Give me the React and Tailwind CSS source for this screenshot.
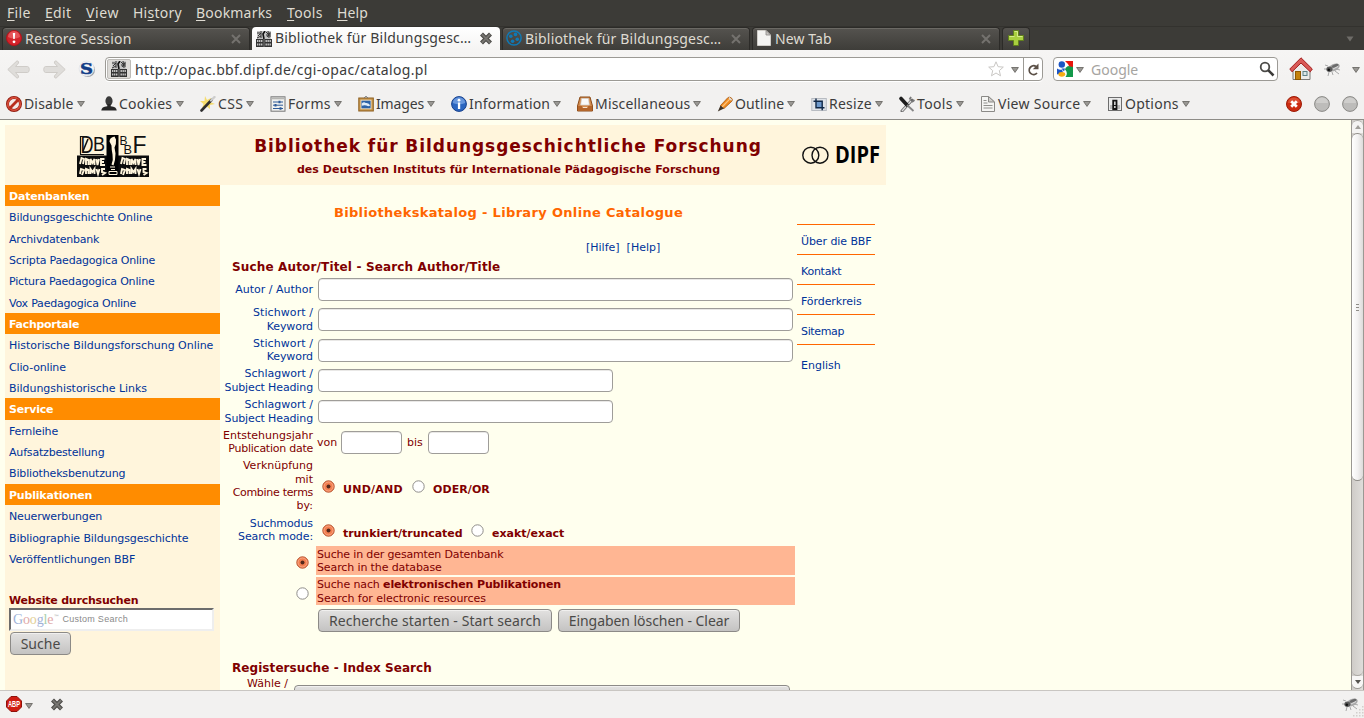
import React from "react";

/* ---------- small shared glyphs ---------- */

const Caret = ({ className = "" }) => (
  <svg width="8" height="6" viewBox="0 0 8 6" className={"shrink-0 " + className}>
    <path d="M0.6 0.5H7.4L4 5.4Z" fill="#9a9894" stroke="#6d6b67" strokeWidth="0.9" />
  </svg>
);

const Favicon = () => (
  <svg width="16" height="16" viewBox="0 0 16 16" className="shrink-0">
    <rect x="1" y="0" width="14" height="8" fill="#c4c4c4" />
    <path d="M1 2h3M2 5l3-3M5 0v7M1 7l4-2M10 1l2 2M11 6l3-4M14 1v5M10 4h4M12 0l1 7" stroke="#333" strokeWidth="1" fill="none" />
    <path d="M9 0 7 3 8 8" stroke="#111" strokeWidth="1.6" fill="none" />
    <rect x="0" y="8" width="16" height="8" fill="#333" />
    <path d="M1 10h5.500M1 13.500h5.500M9.500 10h5.500M9.500 13.500h5.500" stroke="#c2c2c2" strokeWidth="1.8" strokeDasharray="1.4 .6" />
    <path d="M8 8v8" stroke="#777" />
  </svg>
);

const Fly = () => (
  <svg width="18" height="15" viewBox="0 0 18 15" className="shrink-0">
    <path d="M4 4 1 3M3 7H0M5 10 4 14M8 10l1 3M11 9l4 3M12 7l4 1" stroke="#a9a9a9" strokeWidth="1" fill="none" />
    <ellipse cx="10" cy="5.500" rx="6" ry="3.500" fill="#a9a9a9" transform="rotate(-24 10 5.500)" />
    <ellipse cx="11" cy="3.800" rx="3.600" ry="1.500" fill="#6b6b6b" transform="rotate(-20 11 3.800)" />
    <ellipse cx="5.400" cy="7.300" rx="3" ry="2.700" fill="#5a5a5a" />
    <circle cx="4.800" cy="7.700" r="1.300" fill="#111" />
    <path d="M9 7 14 4.500" stroke="#dedede" />
  </svg>
);

const TabClose = () => (
  <svg width="12" height="12" viewBox="0 0 12 12" className="shrink-0">
    <path d="M2 2 10 10M10 2 2 10" stroke="#74726e" strokeWidth="2" />
  </svg>
);

const HeavyClose = () => (
  <svg width="14" height="13" viewBox="0 0 14 13" className="shrink-0">
    <path d="M2.5 2 11.5 11M11.5 2 2.5 11" stroke="#4a4946" strokeWidth="4.2" />
    <path d="M2.8 2.3 11.2 10.7M11.2 2.3 2.8 10.7" stroke="#777571" strokeWidth="2" />
  </svg>
);

/* ---------- browser chrome ---------- */

const menus = [
  ["", "F", "ile", "w-[38px] tracking-[0.300px]"],
  ["", "E", "dit", "w-[41px] tracking-[0.300px]"],
  ["", "V", "iew", "w-[47px] tracking-[0.600px]"],
  ["Hi", "s", "tory", "w-[63px] tracking-[0.250px]"],
  ["", "B", "ookmarks", "w-[91px] tracking-[0.200px]"],
  ["", "T", "ools", "w-[50px] tracking-[0.350px]"],
  ["", "H", "elp", "w-[50px] tracking-[0.100px]"],
];

function MenuBar() {
  return (
    <div className="flex h-[26px] items-center bg-[#3c3b37] pb-[2px] pl-[7px] text-[14px] text-[#dfdbd2]">
      {menus.map(([a, k, b, w]) => (
        <span key={k + b} className={"shrink-0 whitespace-nowrap " + w}>
          {a}
          <span className="underline underline-offset-2">{k}</span>
          {b}
        </span>
      ))}
    </div>
  );
}

function Tab({ icon, title, active, width, className = "" }) {
  return (
    <div
      className={
        "flex h-[23px] shrink-0 items-center rounded-t-[4px] pr-[7px] " +
        width +
        " " +
        (active
          ? "bg-gradient-to-b from-white to-[#f5f4f3] pl-[4px] text-[#3c3c3c]"
          : "border border-b-0 border-[#2c2b28] bg-gradient-to-b from-[#55534f] to-[#3e3d39] pl-[3px] text-[#dfdbd2] shadow-[inset_0_1px_0_#6b6964]") +
        " " +
        className
      }
    >
      {icon}
      <span className="mb-[2px] ml-[3px] grow whitespace-nowrap">{title}</span>
      <div className="mb-[1px]">{active ? <HeavyClose /> : <TabClose />}</div>
    </div>
  );
}

function TabBar() {
  return (
    <div className="flex h-[24px] items-end gap-[2px] border-t border-[#33322e] bg-[#3c3b37] pl-[2px] text-[14px]">
      <Tab
        width="w-[248px]"
        title="Restore Session"
        className="tracking-[0.200px]"
        icon={
          <svg width="16" height="16" viewBox="0 0 16 16" className="-mt-[2px] shrink-0">
            <circle cx="8" cy="8" r="7.5" fill="#d2232a" stroke="#b3141b" />
            <path d="M2 7a6 6 0 0 1 12 0q-6 3-12 0" fill="#ee6a6c" opacity=".7" />
            <path d="M6.8 3h2.4l-.5 6H7.3z" fill="#fff" />
            <circle cx="8" cy="11.8" r="1.4" fill="#fff" />
          </svg>
        }
      />
      <Tab width="w-[248px]" active className="tracking-[0.180px]" title="Bibliothek für Bildungsgesc…" icon={<Favicon />} />
      <Tab
        width="w-[248px]"
        title="Bibliothek für Bildungsgesc…"
        className="tracking-[0.180px]"
        icon={
          <svg width="16" height="16" viewBox="0 0 16 16" className="-mt-[2px] shrink-0">
            <circle cx="8" cy="8" r="7.1" fill="none" stroke="#0f79b5" strokeWidth="1.5" />
            <g fill="#0f79b5">
              <circle cx="9.5" cy="4.4" r="1.8" />
              <circle cx="4.8" cy="6.3" r="1.8" />
              <circle cx="6.6" cy="11.2" r="1.8" />
              <circle cx="11.3" cy="9.3" r="1.8" />
            </g>
          </svg>
        }
      />
      <Tab
        width="w-[248px]"
        title="New Tab"
        className="tracking-[0.100px]"
        icon={
          <svg width="14" height="16" viewBox="0 0 14 16" className="-mt-[2px] ml-[1px] mr-[1px] shrink-0">
            <path d="M.5.5H9L13.5 5v10.5H.5z" fill="#f4f4f2" stroke="#d0cec9" />
            <path d="M9 .5V5h4.5z" fill="#c9c7c3" stroke="#8b8985" strokeWidth=".8" />
          </svg>
        }
      />
      <div className="flex h-[23px] w-[28px] shrink-0 items-center justify-center rounded-t-[4px] border border-b-0 border-[#2c2b28] bg-gradient-to-b from-[#55534f] to-[#3e3d39] pb-[2px]">
        <svg width="16" height="16" viewBox="0 0 16 16">
          <path d="M5.5 .5h5v5h5v5h-5v5h-5v-5h-5v-5h5z" fill="#a9cf3f" stroke="#61801c" />
          <path d="M6.5 1.5h3v5h5M1.5 6.5h5" fill="none" stroke="#d6ec8b" />
        </svg>
      </div>
      <div className="flex h-[23px] grow items-center justify-end pr-[10px]">
        <svg width="8" height="6" viewBox="0 0 8 6">
          <path d="M.5.5h7L4 5.5z" fill="#6e6c68" />
        </svg>
      </div>
    </div>
  );
}

const NavArrow = ({ flip }) => (
  <svg width="23" height="19" viewBox="0 0 23 19" className={"shrink-0 " + (flip ? "-scale-x-100" : "")}>
    <path
      d="M10 .8Q12 1 11.600 3L8.500 6.500H20.500Q22.300 6.700 22.300 9.500T20.500 12.500H8.500L11.600 16Q12 18 10 18.200L.8 9.500z"
      fill="#dfddda"
      stroke="#cfccc8"
    />
  </svg>
);

function NavBar() {
  return (
    <div className="flex h-[38px] items-center bg-gradient-to-b from-[#f6f5f4] to-[#f2f1f0] pl-[7px] pr-[4px] text-[14px]">
      <NavArrow />
      <div className="w-[13px] shrink-0" />
      <NavArrow flip />
      <svg width="18" height="18" viewBox="0 0 18 18" className="ml-[12px] shrink-0">
        <circle cx="9.800" cy="9.800" r="7.200" fill="#9ea3ab" />
        <circle cx="8.600" cy="8.600" r="7.500" fill="#f4f5f7" stroke="#dcdfe4" strokeWidth=".6" />
        <text x="2" y="14.200" fontFamily="DejaVu Serif" fontWeight="700" fontSize="15.500" textLength="13" lengthAdjust="spacingAndGlyphs" fill="#123c86" stroke="#123c86" strokeWidth=".5">S</text>
      </svg>
      <div className="ml-[9px] flex h-[24px] w-[938px] shrink-0 items-center rounded-[4px] border border-[#9c9a95] bg-white shadow-[0_1px_0_#fff]">
        <div className="ml-[1px] flex h-[20px] w-[24px] shrink-0 items-center justify-center rounded-[2px] border border-[#bdbbb7] bg-[#dddbd8]">
          <Favicon />
        </div>
        <span className="ml-[4px] grow whitespace-nowrap tracking-[0.350px] text-[#3c3c3c]">http://opac.bbf.dipf.de/cgi-opac/catalog.pl</span>
        <svg width="16" height="16" viewBox="0 0 16 16" className="mr-[7px] shrink-0">
          <path d="M8 .8 10.100 5.700 15.300 6.100 11.300 9.600 12.500 14.800 8 12 3.500 14.800 4.700 9.600.700 6.100 5.900 5.700z" fill="#fff" stroke="#c9c7c4" />
        </svg>
        <Caret className="mr-[4px] mt-[2px]" />
        <div className="flex h-full w-[19px] items-center justify-center border-l border-[#9c9a95]">
          <svg width="12" height="13" viewBox="0 0 12 13">
            <path d="M9 3.400A4.400 4.400 0 1 0 10 10" fill="none" stroke="#5b5047" strokeWidth="1.800" />
            <path d="M11.500 .5V6.200H5.800z" fill="#5b5047" />
          </svg>
        </div>
      </div>
      <div className="ml-[10px] flex h-[24px] w-[225px] shrink-0 items-center rounded-[4px] border border-[#9c9a95] bg-white pl-[3px] pr-[2px]">
        <svg width="16" height="16" viewBox="0 0 16 16" className="shrink-0">
          <rect width="16" height="16" fill="#fff" />
          <path d="M8 0h8v7h-3Q11 2 8 0z" fill="#e8150c" />
          <path d="M16 6v10H8.500Q11.500 12 8 8.500q0-2 3-3.500z" fill="#12994a" />
          <path d="M0 7.500q3 2 5 1l1 3-6 2z" fill="#1b55c5" />
          <circle cx="4.800" cy="3.500" r="3.200" fill="#1b55c5" />
          <path d="M4.500 7.500h3.500l-1 3z" fill="#1b55c5" />
          <ellipse cx="4.800" cy="13.300" rx="3.400" ry="2.400" fill="#f6ad14" />
        </svg>
        <Caret className="ml-[3px] mt-[2px]" />
        <span className="ml-[7px] grow text-[#a6a4a1]">Google</span>
        <svg width="16" height="16" viewBox="0 0 16 16" className="shrink-0">
          <circle cx="6" cy="6" r="4.300" fill="none" stroke="#4b4a47" strokeWidth="1.800" />
          <path d="M9.200 9.200 14.500 14.500" stroke="#3b3a38" strokeWidth="2.600" />
        </svg>
      </div>
      <svg width="24" height="24" viewBox="0 0 24 24" className="ml-[11px] shrink-0">
        <path d="M4 12v10.500h17V12L12.500 5z" fill="#ececea" stroke="#7b7a78" />
        <path d="M12 .8 23.300 12l-2 2.800L12 6 3 14.800.8 12z" fill="#d95a57" stroke="#a4201f" />
        <rect x="6.500" y="14.500" width="5" height="8" fill="#c4820e" stroke="#8f5902" />
        <rect x="14" y="14.500" width="4" height="4" fill="#dbe7e9" stroke="#5f8287" />
      </svg>
      <div className="w-[11px] shrink-0" />
      <Fly />
      <Caret className="ml-auto mt-[2px]" />
    </div>
  );
}

const I = ({ children }) => (
  <svg width="16" height="16" viewBox="0 0 16 16" className="shrink-0">
    {children}
  </svg>
);

const icons = {
  disable: (
    <I>
      <circle cx="8" cy="8" r="6.500" fill="#f4e9e7" stroke="#8f1a0d" strokeWidth="3" />
      <circle cx="8" cy="8" r="6.300" fill="none" stroke="#d64c3a" strokeWidth="1.800" />
      <path d="M3.600 12.400 12.400 3.600" stroke="#b92e1d" strokeWidth="2.800" />
    </I>
  ),
  cookies: (
    <I>
      <ellipse cx="8" cy="5" rx="3.600" ry="4.700" fill="#3a3a3a" />
      <path d="M6.300 8h3.400v2.200q6 .6 6 4.300H.3q0-3.700 6-4.300z" fill="#262626" />
    </I>
  ),
  css: (
    <I>
      <path d="M5 0 7 4 11 2 10 6 15 8 10 9 10 13 6 10 2 12 3.500 8 0 5 4.500 5z" fill="#f5dc6e" />
      <path d="M1.500 14.500 11.500 4" stroke="#2e2e2e" strokeWidth="2.600" strokeLinecap="round" />
      <path d="M11 4.500 14.500 1" stroke="#cdcdcd" strokeWidth="2.400" strokeLinecap="round" />
    </I>
  ),
  forms: (
    <I>
      <rect x="1" y=".8" width="14" height="14.400" fill="#f1f1ef" stroke="#777" />
      <rect x="1.500" y="1.300" width="13" height="2" fill="#b5b5b2" />
      <path d="M3 6h10M3 9.200h10M3 12.500h10" stroke="#2f5b98" />
      <path d="M9.500 4.700v2.600M5.500 7.900v2.600M10.500 11.200v2.600" stroke="#2f5b98" strokeWidth="2" />
    </I>
  ),
  images: (
    <I>
      <rect x=".8" y="2" width="14.500" height="13" fill="#c7964c" stroke="#8d5f1e" />
      <path d="M6 2 8 .3 10 2" fill="none" stroke="#777" />
      <rect x="3" y="4.200" width="10" height="8.600" fill="#2b62a8" stroke="#f1e6d3" strokeWidth=".8" />
      <path d="M3.800 7.500q2-2 4-.5 3-.5 4.500 2.500l-2 .8q-3.500-2-6.500-.5z" fill="#dcebfa" />
    </I>
  ),
  info: (
    <I>
      <circle cx="8" cy="8" r="7.400" fill="#2c66c0" stroke="#17408c" />
      <path d="M1.800 7a6.200 5.700 0 0 1 12.400 0q-6 2.500-12.400 0z" fill="#80abe8" opacity=".7" />
      <circle cx="8" cy="4.200" r="1.400" fill="#fff" />
      <rect x="6.900" y="6.500" width="2.300" height="6.500" fill="#fff" />
    </I>
  ),
  misc: (
    <I>
      <path d="M3 1h10l2.500 9v5H.5v-5z" fill="#d38b4e" stroke="#8a4a17" />
      <path d="M4.500 2.500h7l.8 6.500H3.700z" fill="#fafafa" stroke="#d0cfcc" strokeWidth=".7" />
      <path d="M.8 10h4l1 2h4.500l1-2h4v4.800H.8z" fill="#b5652a" />
      <path d="M5.800 11.500h4.400" stroke="#f6e1cc" />
    </I>
  ),
  outline: (
    <I>
      <path d="M3.500 9.500 11 1.500q2-1 3.500.6t.5 3L7 12.500z" fill="#f08a1d" stroke="#a4550c" strokeWidth=".8" />
      <path d="M5 11 13 2.800" stroke="#fcc57f" strokeWidth="1.200" />
      <path d="M3.500 9.500 7 12.500 .8 15.500z" fill="#3f3428" />
      <path d="M12 1.500 14.600 4.200" stroke="#ddd" strokeWidth="1.500" />
    </I>
  ),
  resize: (
    <I>
      <rect x=".8" y="2.500" width="14.500" height="12" fill="#dfe3e8" stroke="#b8bcc2" />
      <rect x="5" y="5.500" width="6" height="6" fill="#6e99cc" />
      <path d="M5 2.500v9.300h8.500M2.500 5.200h8.700v9" fill="none" stroke="#0f2747" strokeWidth="1.400" />
    </I>
  ),
  tools: (
    <I>
      <path d="M3 15 13 4" stroke="#6c6c6c" strokeWidth="3" strokeLinecap="round" />
      <path d="M3 15 12 5" stroke="#dedede" strokeWidth="1.300" />
      <path d="M10.500 3.500 12 .8M13 6l2.500-2" stroke="#777" strokeWidth="1.700" />
      <path d="M2 2.500 8 9" stroke="#1d1d1d" strokeWidth="3.600" strokeLinecap="round" />
      <path d="M8 9 14.500 15" stroke="#858585" strokeWidth="1.800" />
    </I>
  ),
  source: (
    <I>
      <path d="M1.500.5h7L14.500 6v9.500h-13z" fill="#f5f5f3" stroke="#8b8a87" />
      <path d="M8.500.5V6h6z" fill="#d2d0cd" stroke="#8b8a87" />
      <path d="M3.500 4.500h3M3.500 7h4M3.500 9.500h9M3.500 12h9" stroke="#90908d" />
    </I>
  ),
  options: (
    <I>
      <rect x="1.500" y="1.500" width="13" height="13" fill="#ebebeb" stroke="#6d6d6d" />
      <rect x="3" y="9" width="10" height="4" fill="#bcbcbc" />
      <path d="M6.200 13V4.600H9.500V13z" fill="#e4e4e4" stroke="#151515" strokeWidth="1.800" />
      <path d="M7 9.500h2" stroke="#151515" strokeWidth="1.200" />
    </I>
  ),
};

const devItems = [
  ["disable", "Disable", "w-[95px]", "w-[54px] tracking-[0.150px]"],
  ["cookies", "Cookies", "w-[99px]", "w-[58px] tracking-[0.250px]"],
  ["css", "CSS", "w-[70px]", "w-[29px] tracking-[0.300px]"],
  ["forms", "Forms", "w-[88px]", "w-[47px] tracking-[0.300px]"],
  ["images", "Images", "w-[93px]", "w-[52px] -tracking-[0.150px]"],
  ["info", "Information", "w-[126px]", "w-[85px] tracking-[0.180px]"],
  ["misc", "Miscellaneous", "w-[140px]", "w-[99px] tracking-[0.180px]"],
  ["outline", "Outline", "w-[94px]", "w-[53px] tracking-[0.120px]"],
  ["resize", "Resize", "w-[88px]", "w-[47px] tracking-[0.250px]"],
  ["tools", "Tools", "w-[81px]", "w-[40px] tracking-[0.350px]"],
  ["source", "View Source", "w-[127px]", "w-[86px] tracking-[0.300px]"],
  ["options", "Options", "w-[100px]", "w-[58px] tracking-[0.250px]"],
];

const GreyBall = () => (
  <svg width="16" height="16" viewBox="0 0 16 16" className="shrink-0">
    <circle cx="8" cy="8" r="7.400" fill="#bdbcba" stroke="#8b8a87" />
    <path d="M2 7a6 5.500 0 0 1 12 0z" fill="#cfcecc" />
  </svg>
);

function DevBar() {
  return (
    <div className="flex h-[32px] items-center border-b border-[#8e8c87] bg-[#f2f1f0] pl-[6px] pr-[6px] text-[14px] text-[#3c3c3c]">
      {devItems.map(([icon, label, w, tw]) => (
        <div key={label} className={"flex shrink-0 items-center " + w}>
          {icons[icon]}
          <span className={"ml-[2px] shrink-0 whitespace-nowrap " + tw}>{label}</span>
          <Caret className="-ml-px" />
        </div>
      ))}
      <div className="ml-auto flex gap-[12px]">
        <svg width="16" height="16" viewBox="0 0 16 16">
          <circle cx="8" cy="8" r="7.500" fill="#cc2c12" stroke="#9c1c08" />
          <path d="M2 7a6 5.500 0 0 1 12 0z" fill="#e25c42" opacity=".7" />
          <path d="M5.200 5.200 10.800 10.800M10.800 5.200 5.200 10.800" stroke="#fff" strokeWidth="2.800" />
        </svg>
        <GreyBall />
        <GreyBall />
      </div>
    </div>
  );
}

/* ---------- page content ---------- */

const BbfLogo = () => (
  <svg width="74" height="44" viewBox="0 0 74 44" overflow="visible">
    <path d="M4.500 2v18.500M4 20.500h24M4 2.500h6" fill="none" stroke="#111" strokeWidth="1.200" />
    <path d="M7 17 12 5" stroke="#111" strokeWidth="1.600" />
    <g fontFamily="Liberation Sans" fill="#111">
      <text x="4.500" y="18.500" fontSize="23" textLength="13" lengthAdjust="spacingAndGlyphs">D</text>
      <text x="17" y="17" fontSize="20.500" textLength="12" lengthAdjust="spacingAndGlyphs">B</text>
      <text x="43.500" y="11" fontSize="13" textLength="8" lengthAdjust="spacingAndGlyphs">B</text>
      <text x="47.500" y="19.500" fontSize="13" textLength="8.500" lengthAdjust="spacingAndGlyphs">B</text>
      <text x="56.500" y="19" fontSize="24" textLength="14" lengthAdjust="spacingAndGlyphs">F</text>
    </g>
    <rect x="1" y="21.500" width="72" height="21.500" fill="#0c0c0c" />
    <rect x="30.500" y="1" width="12" height="42" fill="#000" />
    <path d="M38.500 2.500q-5 1-5 5l2 4q0 4 1 9t-1 10l2 1q2-6 2-12l-1-6q2-4 1.500-8z" fill="#fff5dc" />
    <path d="M34 33h5M35 35.500h4M33 37.500h8v3h-8z" stroke="#fff5dc" fill="none" />
    <g fill="none" stroke="#fff5dc" strokeWidth="1.900">
      <path d="M4 30l1.500-6 2.500 1-1 5M10 31v-6l2.500 1v5M14.500 31v-6l2 4 2-4v6M20.500 25l1 6 1.500-6M28.500 25H25v6h4M25 28h3" />
      <path d="M4 40l1-5 3 1-2 5M10 40v-5l2.500 1v4M14.500 40v-5l2 3 2-3v5M20.500 35l1.500 5 1.500-5M29 35h-3v3l3 1-3 2" />
      <path d="M45 30l1.500-6 2.500 1-1 5M51 31v-6l2.500 1v5M55.500 31v-6l2 4 2-4v6M61.500 25l1 6 1.500-6M70 25h-3.500v6h4M66.500 28h3" />
      <path d="M45 40l1-5 3 1-2 5M51 40v-5l2.500 1v4M55.500 40v-5l2 3 2-3v5M61.500 35l1.500 5 1.500-5M70.500 35h-3v3l3 1-3 2" />
    </g>
  </svg>
);

function PageHeader() {
  return (
    <div className="flex h-[60px] w-[881px] bg-[#fff5dc]">
      <div className="flex w-[215px] shrink-0 justify-center pt-[9px]">
        <BbfLogo />
      </div>
      <div className="flex w-[576px] shrink-0 flex-col items-center whitespace-nowrap font-bold text-[#800000]">
        <div className="mt-[10px] text-[17px] leading-[22px] tracking-[0.940px]">Bibliothek für Bildungsgeschichtliche Forschung</div>
        <div className="mt-[6px] pl-px text-[11px] leading-[14px] tracking-[0.050px]">des Deutschen Instituts für Internationale Pädagogische Forschung</div>
      </div>
      <svg width="80" height="22" viewBox="0 0 80 22" className="ml-[6px] mt-[19px] shrink-0" overflow="visible">
        <circle cx="8.800" cy="11.200" r="8" fill="none" stroke="#111" strokeWidth="1.400" />
        <circle cx="18" cy="11.200" r="8" fill="none" stroke="#111" strokeWidth="1.400" />
        <text x="33" y="19" fontFamily="Open Sans" fontWeight="700" fontSize="23" textLength="45" lengthAdjust="spacingAndGlyphs" fill="#000">DIPF</text>
      </svg>
    </div>
  );
}

const sidebar = [
  {
    head: "Datenbanken",
    track: "-tracking-[0.200px]",
    links: [
      ["Bildungsgeschichte Online", "-tracking-[0.100px]"],
      ["Archivdatenbank", "-tracking-[0.200px]"],
      ["Scripta Paedagogica Online", "-tracking-[0.190px]"],
      ["Pictura Paedagogica Online", "-tracking-[0.190px]"],
      ["Vox Paedagogica Online", "-tracking-[0.220px]"],
    ],
  },
  {
    head: "Fachportale",
    track: "-tracking-[0.300px]",
    links: [
      ["Historische Bildungsforschung Online", "-tracking-[0.040px]"],
      ["Clio-online", "-tracking-[0.150px]"],
      ["Bildungshistorische Links", "-tracking-[0.040px]"],
    ],
  },
  {
    head: "Service",
    track: "-tracking-[0.200px]",
    links: [
      ["Fernleihe", "-tracking-[0.150px]"],
      ["Aufsatzbestellung", "-tracking-[0.180px]"],
      ["Bibliotheksbenutzung", "-tracking-[0.150px]"],
    ],
  },
  {
    head: "Publikationen",
    track: "-tracking-[0.200px]",
    links: [
      ["Neuerwerbungen", "-tracking-[0.150px]"],
      ["Bibliographie Bildungsgeschichte", "-tracking-[0.110px]"],
      ["Veröffentlichungen BBF", "-tracking-[0.130px]"],
    ],
  },
];

const buttonStyle =
  "shrink-0 rounded-[4px] border border-[#8c8a87] bg-gradient-to-b from-[#e2e1e0] to-[#c4c3c2] text-center font-['Noto_Sans',sans-serif] text-[14px] leading-[21px] text-[#4b4a48] whitespace-nowrap h-[23px] shadow-[inset_0_1px_0_#f1f0ef]";

function Sidebar() {
  return (
    <div className="w-[215px] shrink-0 bg-[#fff5dc] text-[#003399]">
      {sidebar.map(({ head, track, links }) => (
        <React.Fragment key={head}>
          <div className={"h-[21.350px] bg-[#ff8c00] pl-[4px] font-bold leading-[23px] text-white " + track}>{head}</div>
          {links.map(([l, t]) => (
            <div key={l} className={"h-[21.350px] whitespace-nowrap pl-[4px] leading-[23px] " + t}>
              {l}
            </div>
          ))}
        </React.Fragment>
      ))}
      <div className="mt-[25px] pl-[4px] font-bold leading-[14px] -tracking-[0.220px] text-[#800000]">Website durchsuchen</div>
      <div className="ml-[4px] flex h-[23px] w-[205px] items-center border-2 border-b-[#eeeeee] border-l-[#6c6c6c] border-r-[#eeeeee] border-t-[#6c6c6c] bg-white pl-[2px]">
        <span className="font-['Liberation_Serif',serif] text-[14px] leading-none -tracking-[0.150px]">
          <span className="text-[#9fb2d8]">G</span>
          <span className="text-[#dfa9a9]">o</span>
          <span className="text-[#e2cf96]">o</span>
          <span className="text-[#9fb2d8]">g</span>
          <span className="text-[#a8cfae]">l</span>
          <span className="text-[#dfa9a9]">e</span>
        </span>
        <span className="mb-[5px] text-[6px] leading-none text-[#999999]">™</span>
        <span className="ml-[3px] font-['Liberation_Sans',sans-serif] text-[9px] tracking-[0.280px] text-[#8a8a8a]">Custom Search</span>
      </div>
      <div className={buttonStyle + " ml-[5px] mt-px w-[61px]"}>Suche</div>
    </div>
  );
}

const Radio = ({ on, className = "" }) => (
  <svg width="13" height="13" viewBox="0 0 13 13" className={"shrink-0 " + className}>
    <circle cx="6.500" cy="6.500" r="5.700" fill={on ? "#f37f50" : "#ffffff"} stroke={on ? "#b5532f" : "#8f8d89"} />
    {on && <circle cx="6.500" cy="6.500" r="4.500" fill="none" stroke="#f8a583" />}
    {on && <circle cx="6.500" cy="6.500" r="2" fill="#54281a" />}
  </svg>
);

const Field = ({ w }) => (
  <div className={"h-[23px] shrink-0 rounded-[4px] border border-[#9f9d99] bg-white shadow-[inset_0_1px_0_#e9e8e6] " + w} />
);

function Row({ lines, h, link = true, children }) {
  return (
    <div className={"flex items-center " + h}>
      <div className={"mr-[5px] w-[93px] shrink-0 whitespace-nowrap text-right leading-[13.300px] " + (link ? "text-[#003399]" : "text-[#800000]")}>
        {lines.map(([l, t], i) => (
          <div key={i} className={t}>
            {l}
          </div>
        ))}
      </div>
      {children}
    </div>
  );
}

function SearchForm() {
  return (
    <div className="w-[577px] shrink-0 text-[#800000]">
      <div className="mt-[19px] text-center text-[13px] font-bold leading-[18px] tracking-[0.330px] text-[#ff6600]">Bibliothekskatalog - Library Online Catalogue</div>
      <div className="mt-[18px] flex gap-[7px] pl-[366px] leading-[16px] text-[#003399]">
        <span>[Hilfe]</span>
        <span>[Help]</span>
      </div>
      <div className="mt-[4px] pl-[12px] text-[12px] font-bold leading-[15px] tracking-[0.150px]">Suche Autor/Titel - Search Author/Title</div>

      <Row h="h-[29px]" lines={[["Autor / Author", ""]]}>
        <Field w="w-[475px]" />
      </Row>
      <Row h="h-[31px]" lines={[["Stichwort /", "tracking-[0.080px]"], ["Keyword", "-tracking-[0.100px]"]]}>
        <Field w="w-[475px]" />
      </Row>
      <Row h="h-[30px]" lines={[["Stichwort /", "tracking-[0.080px]"], ["Keyword", "-tracking-[0.100px]"]]}>
        <Field w="w-[475px]" />
      </Row>
      <Row h="h-[31px]" lines={[["Schlagwort /", ""], ["Subject Heading", "-tracking-[0.130px]"]]}>
        <Field w="w-[295px]" />
      </Row>
      <Row h="h-[31px]" lines={[["Schlagwort /", ""], ["Subject Heading", "-tracking-[0.130px]"]]}>
        <Field w="w-[295px]" />
      </Row>
      <Row h="h-[30px]" link={false} lines={[["Entstehungsjahr", ""], ["Publication date", "-tracking-[0.250px]"]]}>
        <span className="-ml-px w-[24px]">von</span>
        <Field w="w-[61px]" />
        <span className="ml-[5px] w-[21px]">bis</span>
        <Field w="w-[61px]" />
      </Row>
      <Row h="h-[58px]" link={false} lines={[["Verknüpfung", ""], ["mit", ""], ["Combine terms", "-tracking-[0.300px]"], ["by:", ""]]}>
        <Radio on className="ml-[4px]" />
        <b className="ml-[8px] mt-[6px] w-[69px] tracking-[0.250px]">UND/AND</b>
        <Radio />
        <b className="ml-[8px] mt-[6px] tracking-[0.080px]">ODER/OR</b>
      </Row>
      <Row h="h-[30px]" lines={[["Suchmodus", "-tracking-[0.100px]"], ["Search mode:", "-tracking-[0.100px]"]]}>
        <Radio on className="ml-[4px]" />
        <b className="ml-[8px] mt-[6px] w-[128px] whitespace-nowrap -tracking-[0.050px]">trunkiert/truncated</b>
        <Radio />
        <b className="ml-[8px] mt-[6px]">exakt/exact</b>
      </Row>

      <div className="mt-px flex h-[29px] items-center pl-[76px]">
        <Radio on className="mr-[7px] mt-[3px]" />
        <div className="h-full w-[479px] bg-[#ffb693] pl-px pt-[2px] leading-[13px]">
          <span className="-tracking-[0.160px]">Suche in der gesamten Datenbank</span>
          <br />
          <span className="-tracking-[0.120px]">Search in the database</span>
        </div>
      </div>
      <div className="mt-[2px] flex h-[28px] items-center pl-[76px]">
        <Radio className="mr-[7px] mt-[4px]" />
        <div className="h-full w-[479px] bg-[#ffb693] pl-px pt-[1px] leading-[13.500px]">
          <span className="-tracking-[0.130px]">
            Suche nach <b>elektronischen Publikationen</b>
          </span>
          <br />
          <span className="-tracking-[0.060px]">Search for electronic resources</span>
        </div>
      </div>

      <div className="mt-[4px] flex gap-[6px] pl-[98px]">
        <div className={buttonStyle + " w-[234px] tracking-[0.080px]"}>Recherche starten - Start search</div>
        <div className={buttonStyle + " w-[182px] -tracking-[0.050px]"}>Eingaben löschen - Clear</div>
      </div>

      <div className="mt-[28px] pl-[12px] text-[12px] font-bold leading-[16px] tracking-[0.070px]">Registersuche - Index Search</div>
      <div className="flex">
        <span className="mr-[6px] w-[68px] text-right leading-[15px]">Wähle /</span>
        <div className={buttonStyle + " mt-[9px] w-[496px]"} />
      </div>
    </div>
  );
}

function RightNav() {
  return (
    <div className="mt-[39px] w-[78px] shrink-0 text-[#003399]">
      {[
        ["Über die BBF", "-tracking-[0.080px]"],
        ["Kontakt", "-tracking-[0.250px]"],
        ["Förderkreis", "-tracking-[0.080px]"],
        ["Sitemap", "-tracking-[0.350px]"],
      ].map(([t, c]) => (
        <div key={t} className={"h-[30px] whitespace-nowrap border-t border-[#ff6600] pl-[4px] leading-[33px] " + c}>
          {t}
        </div>
      ))}
      <div className="border-t border-[#ff6600] pl-[4px] pt-[12px] leading-[17px]">English</div>
    </div>
  );
}

function Scrollbar() {
  return (
    <div className="flex w-[13px] shrink-0 flex-col border-x border-[#9b9893] bg-gradient-to-r from-[#cfccc8] to-[#dfddda]">
      <div className="flex h-[13px] shrink-0 items-center justify-center rounded-t-[6px] border-t border-[#aaa8a4] bg-[#f4f3f2]">
        <svg width="6" height="4" viewBox="0 0 6 4">
          <path d="M3 0 6 4H0z" fill="#a09e9a" />
        </svg>
      </div>
      <div className="flex h-[348px] shrink-0 flex-col items-center justify-center gap-[2px] rounded-[6px] border-y border-[#8f8d88] bg-gradient-to-r from-white via-[#f3f2f2] to-[#dddbda]">
        <div className="h-px w-[3px] bg-[#8f8d88]" />
        <div className="h-px w-[3px] bg-[#8f8d88]" />
        <div className="h-px w-[3px] bg-[#8f8d88]" />
      </div>
      <div className="grow rounded-b-[6px] border-b border-[#aaa8a4]" />
      <div className="mb-px flex h-[13px] shrink-0 items-center justify-center rounded-b-[6px] border-b border-[#9b9893] bg-[#f7f6f5]">
        <svg width="6" height="4" viewBox="0 0 6 4">
          <path d="M0 0h6L3 4z" fill="#55534f" />
        </svg>
      </div>
    </div>
  );
}

const resizeDots = [
  [12, 0], [9, 3], [12, 3], [6, 6], [9, 6], [12, 6], [3, 9], [6, 9], [9, 9], [12, 9],
];

function StatusBar() {
  return (
    <div className="flex h-[28px] shrink-0 items-center border-t border-[#c9c6c2] bg-[#f2f1f0] pl-[6px]">
      <svg width="16" height="16" viewBox="0 0 16 16" className="-mt-px">
        <path d="M5 .5h6L15.500 5v6L11 15.500H5L.5 11V5z" fill="#d01c12" stroke="#8e120b" />
        <text x="2" y="11" fontFamily="Liberation Sans" fontWeight="700" fontSize="8.500" textLength="12" lengthAdjust="spacingAndGlyphs" fill="#fff">ABP</text>
      </svg>
      <Caret className="ml-[3px] mt-[2px]" />
      <div className="-mt-px ml-[17px]">
        <HeavyClose />
      </div>
      <div className="ml-auto flex">
        <Fly />
      </div>
      <svg width="14" height="12" viewBox="0 0 14 12" className="-ml-[10px] self-end">
        {resizeDots.map(([x, y]) => (
          <rect key={x + "-" + y} x={x} y={y} width="1.500" height="1.500" fill="#d2cfcb" />
        ))}
      </svg>
    </div>
  );
}

export default function App() {
  return (
    <div className="flex h-[718px] w-[1364px] flex-col overflow-hidden font-['Noto_Sans',sans-serif]">
      <MenuBar />
      <TabBar />
      <NavBar />
      <DevBar />
      <div className="flex h-[570px] shrink-0 bg-[#ffffee]">
        <div className="h-full grow overflow-hidden pl-[5px] pt-[5px] font-['DejaVu_Sans',sans-serif] text-[11px] leading-[13px]">
          <PageHeader />
          <div className="flex h-[505px]">
            <Sidebar />
            <SearchForm />
            <RightNav />
          </div>
        </div>
        <Scrollbar />
      </div>
      <StatusBar />
    </div>
  );
}
